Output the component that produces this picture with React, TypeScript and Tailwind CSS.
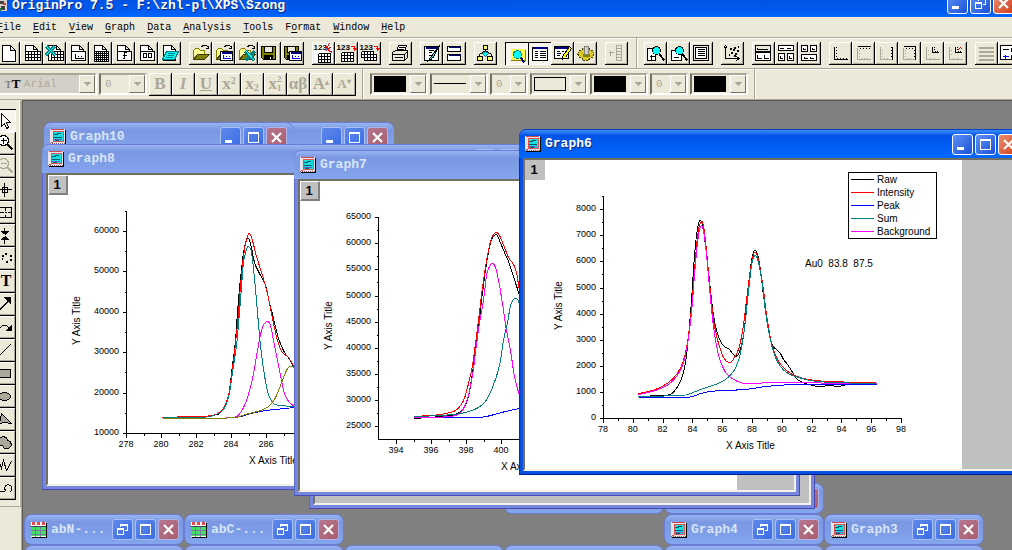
import type { ReactNode } from 'react';
import clsx from 'clsx';

type Point = [number, number];

/* ---------- small icon pieces ---------- */

function Icon({ children }: { children: ReactNode }) {
  return (
    <svg
      viewBox="-0.5 -0.5 22 22"
      className="block size-[22px] shrink-0"
      fill="none"
      stroke="#000"
      shapeRendering="crispEdges"
      aria-hidden="true"
    >
      {children}
    </svg>
  );
}

function Grid({ x, y, cols, rows, w = 3, h = 3 }: { x: number; y: number; cols: number; rows: number; w?: number; h?: number }) {
  let d = '';
  for (let i = 0; i <= cols; i++) d += `M${x + i * w} ${y}v${rows * h}`;
  for (let i = 0; i <= rows; i++) d += `M${x} ${y + i * h}h${cols * w}`;
  return (
    <>
      <rect x={x} y={y} width={cols * w} height={rows * h} fill="#fff" stroke="none" />
      <path d={d} />
    </>
  );
}

const sheet = <path d="M5 18V3h8l4 4v11z M13 3v4h4" fill="#fff" />;
const sheetBox = (
  <>
    {sheet}
    <rect x="5" y="9" width="14" height="9" fill="#fff" />
  </>
);
const folder = (
  <>
    <path d="M4 17V8l2-2h3l2 2h4v4" fill="#ffff99" stroke="#808000" />
    <path d="M4 17l4-5h12l-5 5z" fill="#808000" stroke="#404000" />
    <path d="M12 4l2-1h3l2 2M16 6h3V3" />
  </>
);
const floppy = (
  <>
    <path d="M3 4h14v13H5l-2-2z" fill="#808000" />
    <path d="M6 4h8v6H6z" fill="#ece9d8" />
    <path d="M6 13h8v4H6z" fill="#000" />
    <path d="M12 14v2" stroke="#fff" />
  </>
);
const miniGraph = (
  <>
    <rect x="8" y="9" width="12" height="9" fill="#fff" />
    <path d="M9 10h10" stroke="#000080" strokeWidth="2" />
    <path d="M11 12v4h7M13 14h1M16 14h1" stroke="#00f" />
  </>
);
const digits = (
  <text x="1" y="7" fontSize="8" fontWeight="700" fontFamily="Liberation Sans, sans-serif" fill="#000" stroke="none">
    123
  </text>
);
const redArrow = <path d="M15 4h4v4M17 6h4M18 7h2" stroke="#f00" />;
const glass = (
  <>
    <path d="M15 12l5 6" strokeWidth="2" />
    <circle cx="12" cy="8" r="4" fill="#0ff" />
  </>
);

const icons: Record<string, ReactNode> = {
  new: <path d="M5 3h8l5 5v11H5z M13 3v5h5" fill="#fff" />,
  worksheet: (
    <>
      {sheet}
      <Grid x={5} y={9} cols={5} rows={3} />
    </>
  ),
  excel: (
    <>
      {sheet}
      <Grid x={8} y={9} cols={4} rows={3} />
      <path d="M3 4l9 9M11 4l-9 9" stroke="#008080" strokeWidth="3" />
      <path d="M3 4l9 9M11 4l-9 9" stroke="#0ff" />
    </>
  ),
  graph: (
    <>
      {sheetBox}
      <path d="M9 11v5h8M11 14h1M14 14h1" />
    </>
  ),
  matrix: (
    <>
      {sheet}
      <Grid x={5} y={9} cols={7} rows={5} w={2} h={2} />
    </>
  ),
  func: (
    <>
      {sheetBox}
      <path d="M14 10h-2v6h-2M10 13h4" />
    </>
  ),
  layout: (
    <>
      {sheetBox}
      <path d="M8 11h3v4H8zM13 11h3v4h-3z" />
    </>
  ),
  notes: (
    <>
      {sheet}
      <path d="M8 9h12l-4 8H4z" fill="#0ff" stroke="#008080" />
      <path d="M9 11h7M8 13h7M7 15h7" stroke="#008080" />
    </>
  ),
  open: folder,
  openGraph: (
    <>
      {folder}
      {miniGraph}
    </>
  ),
  openExcel: (
    <>
      {folder}
      <path d="M10 9l9 9M19 9l-9 9" stroke="#008080" strokeWidth="3" />
      <path d="M11 9l8 9" stroke="#0ff" />
    </>
  ),
  save: floppy,
  saveGraph: (
    <>
      {floppy}
      {miniGraph}
    </>
  ),
  importWizard: (
    <>
      <rect x="1" y="1" width="19" height="19" fill="#fff" stroke="none" />
      {digits}
      <path d="M14 4l2 4 4 2M17 1l-3 5M14 8l5-4" stroke="#f00" />
      <Grid x={6} y={11} cols={4} rows={3} />
    </>
  ),
  importSingle: (
    <>
      {digits}
      {redArrow}
      <Grid x={6} y={10} cols={4} rows={3} />
    </>
  ),
  importMulti: (
    <>
      {digits}
      {redArrow}
      <Grid x={3} y={9} cols={4} rows={2} />
      <Grid x={6} y={12} cols={4} rows={2} />
    </>
  ),
  print: (
    <>
      <path d="M7 9l2-6h8l-2 6z" fill="#fff" />
      <path d="M9 5h6M8 7h6" />
      <path d="M3 10l3-2h12v7l-3 3H3z" fill="#ece9d8" />
      <path d="M3 12h12v6M15 12l3-3M5 15h8" />
      <path d="M13 14h1" stroke="#ff0" />
    </>
  ),
  refresh: (
    <>
      <rect x="4" y="4" width="14" height="14" fill="#fff" />
      <path d="M5 5h12M5 6h12" stroke="#000080" />
      <path d="M8 8h5M8 10h3M8 13h2" />
      <path d="M19 3L10 15l-2 3 4-2z" fill="#0ff" />
    </>
  ),
  duplicate: (
    <>
      <rect x="4" y="4" width="13" height="5" fill="#fff" />
      <path d="M5 5h12" stroke="#000080" />
      <rect x="4" y="12" width="13" height="6" fill="#fff" />
      <path d="M5 13h12" stroke="#000080" />
    </>
  ),
  explorer: (
    <>
      <path d="M11 7v6M5 15v-3l6-4 6 4v3" />
      <rect x="9" y="3" width="4" height="4" fill="#ffff66" />
      <path d="M8 11l3-2 3 2-3 3z" fill="#0ff" stroke="#008080" />
      <rect x="3" y="14" width="5" height="4" fill="#ffff66" />
      <rect x="13" y="14" width="5" height="4" fill="#ffff66" />
    </>
  ),
  projectView: (
    <>
      <rect x="4" y="5" width="14" height="12" fill="#ffff4d" stroke="none" />
      <path d="M4 17h15V6" stroke="#808000" />
      <path d="M14 14l4 5" stroke="#000080" strokeWidth="2" />
      <circle cx="11" cy="11" r="4" fill="#0ff" stroke="#008080" />
    </>
  ),
  results: (
    <>
      <rect x="3" y="4" width="15" height="13" fill="#fff" />
      <path d="M3 4h15M3 5h15" stroke="#000080" />
      <path d="M5 8h3M10 8h6M5 10h3M10 10h6M5 12h3M10 12h6M5 14h3M10 14h6" />
    </>
  ),
  script: (
    <>
      <rect x="3" y="4" width="14" height="12" fill="#fff" />
      <path d="M3 5h14M3 6h14" stroke="#000080" />
      <path d="M5 9h3M10 9h2M5 11h4M5 13h3" />
      <path d="M18 4l-7 10v3l3-2 6-9z" fill="#ff0" />
    </>
  ),
  code: (
    <>
      <path d="M3 11l2-3 3-1 1-2h5l1 2 3 1 2 3-2 4-3 1-1 2H9l-1-2-3-1z" fill="#d8c820" stroke="#404000" strokeDasharray="2 1" />
      <path d="M8 11h7v3H8z" fill="#808000" stroke="none" />
      <path d="M10 4h4v8h-4z" fill="#d4d0c8" stroke="#808080" />
    </>
  ),
  addColumn: (
    <g stroke="#aca899">
      <path d="M3 10h5M5 8v5M11 3h5v15h-5zM11 6h5M11 9h5M11 12h5M11 15h5" />
    </g>
  ),
  zoomIn: (
    <>
      <path d="M3 6h8v12H3z" fill="#fff" />
      {glass}
      <path d="M5 14h5M7 12v5" />
    </>
  ),
  zoomOut: (
    <>
      <path d="M4 8h7l3 3v7H4z" fill="#fff" />
      <path d="M6 15h5" />
      {glass}
    </>
  ),
  wholePage: (
    <>
      <rect x="3" y="3" width="15" height="15" />
      <rect x="5" y="5" width="11" height="11" fill="#fff" />
      <path d="M7 7h7M7 9h7M7 11h7M7 13h7" />
    </>
  ),
  rescale: (
    <>
      <path d="M4 4v12h13M2 6l2-3 2 3M15 14l3 2-3 2" />
      <path d="M8 6h2M12 5h2M15 8h2M9 10h2M13 11h2M11 7h2M16 4h1M12 13h2M7 12h1" strokeWidth="2" />
    </>
  ),
  extractTwo: (
    <>
      <rect x="3" y="3" width="15" height="6" fill="#ece9d8" />
      <rect x="3" y="10" width="15" height="8" fill="#fff" />
      <path d="M5 5v2h10M5 12v4h4M12 12v4h4" />
    </>
  ),
  extractFour: (
    <g>
      <path d="M3 3h15v5H3zM3 11h6v7H3zM12 11h6v7h-6z" fill="#fff" />
      <path d="M5 5v1h3M12 5v1h3M5 13v3h2M14 13v3h2" />
    </g>
  ),
  extractSix: (
    <g>
      <path d="M3 3h6v6H3zM12 3h6v6h-6zM3 12h15v6H3z" fill="#fff" />
      <path d="M5 5v2h2M14 5v2h2M6 14v2h3M12 14v2h3" />
    </g>
  ),
  axisBL: (
    <>
      <path d="M5 4v13h13" />
      <path d="M6 5h1M6 8h1M6 11h1M6 14h1M8 16v-1M11 16v-1M14 16v-1M17 16v-1" />
    </>
  ),
  axisTop: (
    <>
      <path d="M5 5v12h13M6 8h1M6 11h1M6 14h1M9 16v-1M12 16v-1M15 16v-1" stroke="#aca899" />
      <path d="M5 4h13M8 5v1M11 5v1M14 5v1M17 5v1" />
    </>
  ),
  axisRight: (
    <>
      <path d="M5 4v13h12M6 8h1M6 11h1M6 14h1M9 16v-1M12 16v-1" stroke="#aca899" />
      <path d="M17 4v13M16 5h-1M16 8h-1M16 11h-1M16 14h-1" />
    </>
  ),
  axisTopRight: (
    <>
      <path d="M5 5v12h12M6 8h1M6 11h1M6 14h1M9 16v-1M12 16v-1" stroke="#aca899" />
      <path d="M5 4h12v13M8 5v1M11 5v1M14 5v1M16 8h-1M16 11h-1M16 14h-1" />
    </>
  ),
  axisInset: (
    <>
      <path d="M5 4v13h13M6 8h1M6 12h1M9 16v-1M13 16v-1" stroke="#aca899" />
      <path d="M11 4v6h6M12 5h1M12 7h1M14 9v-1M16 9v-1" />
    </>
  ),
  axisInsetData: (
    <>
      <path d="M5 4v13h13M6 8h1M6 12h1M9 16v-1M13 16v-1" stroke="#aca899" />
      <path d="M11 4v6h6M12 5h1M12 7h1M14 9v-1M16 9v-1" />
      <path d="M13 8l3-3 2 2" stroke="#f00" />
    </>
  ),
  lines: <path d="M3 5h15M3 9h15M3 13h15M3 17h15" stroke="#aca899" strokeWidth="2" />,
  legend: (
    <>
      <rect x="2" y="3" width="19" height="14" fill="#fff" />
      <path d="M4 7h6M13 5h4M13 7h4M13 9h4M13 5v4M13 12h4M13 12v4" />
      <path d="M4 14h6M7 12v4" stroke="#00f" />
    </>
  ),
};

const tools: { name: string; icon: ReactNode; on?: boolean; letter?: string }[] = [
  { name: 'Pointer', on: true, icon: <path d="M7 3v13l3-3 2 5 2-1-2-5h4z" fill="#fff" /> },
  {
    name: 'Zoom In',
    icon: (
      <>
        <circle cx="10" cy="8" r="5" fill="#fff" />
        <path d="M7 8h6M10 5v6" />
        <path d="M14 12l5 5" strokeWidth="2" />
      </>
    ),
  },
  {
    name: 'Zoom Out',
    icon: (
      <g stroke="#aca899">
        <circle cx="10" cy="8" r="5" />
        <path d="M7 8h6" />
        <path d="M14 12l5 5" strokeWidth="2" />
      </g>
    ),
  },
  { name: 'Screen Reader', icon: <path d="M11 4v14M5 11h13M9 9h5v5H9z" /> },
  { name: 'Data Reader', icon: <path d="M6 6h12v10H6zM6 11h4M14 11h4M12 6v3M12 13v3M11 11h2" /> },
  {
    name: 'Data Selector',
    icon: <path d="M11 3v4M11 19v-4M8 7h7l-3 3zM8 15h7l-3-3z" fill="#000" />,
  },
  { name: 'Draw Data', icon: <path d="M8 8h2M11 6h2M16 8h2M16 12h2M12 14h2M8 11h1" strokeWidth="2" /> },
  { name: 'Text', letter: 'T', icon: null },
  {
    name: 'Arrow',
    icon: (
      <>
        <path d="M6 16L15 7M6 17L16 7" />
        <path d="M11 4h6v6z" fill="#000" />
      </>
    ),
  },
  {
    name: 'Curved Arrow',
    icon: (
      <>
        <path d="M6 12l3-3h4l4 4" />
        <path d="M18 9v5h-5z" fill="#000" />
      </>
    ),
  },
  { name: 'Line', icon: <path d="M6 16L17 5" /> },
  { name: 'Rectangle', icon: <rect x="5" y="7" width="12" height="8" fill="#aca899" /> },
  { name: 'Circle', icon: <ellipse cx="11" cy="11" rx="6" ry="4" fill="#aca899" /> },
  { name: 'Polygon', icon: <path d="M8 5l10 10-8-1-5 2 2-5z" fill="#aca899" /> },
  { name: 'Region', icon: <path d="M6 7l3-2 4 1 1 3 3 1 1 4-3 3h-4l-2-3H6z" fill="#aca899" /> },
  { name: 'Polyline', icon: <path d="M6 8l2 6 2-8 3 10 5-9" /> },
  { name: 'Freehand', icon: <path d="M6 14h5l1-1-1-2 1-3 3-1 3 2v4l-2 2" /> },
];

/* ---------- toolbar controls ---------- */

function ToolButton({ name, on, disabled, children }: { name: string; on?: boolean; disabled?: boolean; children: ReactNode }) {
  return (
    <button
      type="button"
      aria-label={name}
      disabled={disabled}
      className={clsx(
        'flex size-[23px] shrink-0 items-center justify-center overflow-hidden',
        on
          ? 'border-t border-l border-black bg-[#f7f5ee] shadow-[inset_-1px_-1px_0_#fff]'
          : 'border-r border-b border-black bg-[#ece9d8] shadow-[inset_1px_1px_0_#fff,inset_-1px_-1px_0_#aca899]',
      )}
    >
      {children}
    </button>
  );
}

function ToolGroup({ names, on = [] }: { names: string[]; on?: string[] }) {
  return (
    <div className="flex shrink-0">
      {names.map((name) => (
        <ToolButton key={name} name={name} on={on.includes(name)}>
          <Icon>{icons[name]}</Icon>
        </ToolButton>
      ))}
    </div>
  );
}

function Separator() {
  return <div className="w-[2px] shrink-0 self-stretch border-r border-l border-r-white border-l-[#aca899]" />;
}

interface ComboProps {
  label: string;
  value?: string;
  className: string;
  swatch?: ReactNode;
}

function Combo({ label, value = '', className, swatch }: ComboProps) {
  return (
    <div
      className={clsx(
        'relative flex h-[22px] shrink-0 items-center border-2 border-t-[#aca899] border-r-white border-b-white border-l-[#716f64]',
        className,
      )}
    >
      <select
        aria-label={label}
        disabled
        className="h-full w-full appearance-none bg-transparent pl-1 font-['Liberation_Mono',monospace] text-[11px] text-[#aca899]"
      >
        <option>{value}</option>
      </select>
      {swatch}
      <span className="pointer-events-none absolute inset-y-0 right-0 flex w-4 items-center justify-center border border-t-white border-r-[#716f64] border-b-[#716f64] border-l-white bg-[#ece9d8]">
        <svg viewBox="0 0 8 4" className="h-1 w-2" shapeRendering="crispEdges">
          <path d="M0 0h8L4 4z" fill="#aca899" />
        </svg>
      </span>
    </div>
  );
}

const blackSwatch = <span className="pointer-events-none absolute top-px left-[2px] h-4 w-8 bg-black" />;
const lineSwatch = <span className="pointer-events-none absolute top-2 left-[2px] h-px w-8 bg-black" />;
const boxSwatch = <span className="pointer-events-none absolute top-[2px] left-[2px] h-[14px] w-8 border border-black bg-[#ece9d8]" />;

/* ---------- windows ---------- */

function WinButton({ kind, active }: { kind: 'min' | 'max' | 'restore' | 'close'; active?: boolean }) {
  const tone =
    kind === 'close'
      ? active
        ? 'border-white bg-linear-to-br from-[#ee8d6e] to-[#cf3a15]'
        : 'border-[#b5b4e8] bg-linear-to-br from-[#b5758f] to-[#a95f6c]'
      : active
        ? 'border-white bg-linear-to-br from-[#5f90f5] to-[#1a4fd8]'
        : 'border-[#a9c0f5] bg-linear-to-br from-[#5f88ea] to-[#3a6ce4]';
  const labels = { min: 'Minimize', max: 'Maximize', restore: 'Restore', close: 'Close' };
  return (
    <button
      type="button"
      aria-label={labels[kind]}
      className={clsx('flex size-[21px] shrink-0 items-center justify-center rounded-[3px] border', tone)}
    >
      <svg viewBox="0 0 19 19" className="size-[19px]" fill="none" stroke="#fff">
        {kind === 'min' && <path d="M4 13.5h7" strokeWidth="3" />}
        {kind === 'max' && <path d="M4.500 14.500v-10h10v10zM4 5.500h11" shapeRendering="crispEdges" />}
        {kind === 'restore' && (
          <path d="M4.500 14.500v-6h6v6zM4 9.500h7M7.500 7V4.500h7v6h-3M7 5.500h8" shapeRendering="crispEdges" />
        )}
        {kind === 'close' && <path d="M5 5l9 9M14 5l-9 9" strokeWidth="2.200" />}
      </svg>
    </button>
  );
}

function GraphIcon() {
  return (
    <svg viewBox="0 0 16 16" className="size-4 shrink-0" shapeRendering="crispEdges" aria-hidden="true">
      <path d="M1 1h15v15H1z" fill="#000" />
      <path d="M0 0h15v15H0z" fill="#e8e4e8" />
      <path d="M1 0h13v1H1zM1 13h2v1H1z" fill="#d04848" />
      <path d="M3 2h10v10H3z" fill="#18e0e0" stroke="#e05050" />
      <path d="M4 5h3V4h4M4 8h8M5 11h3v-1h4" fill="none" stroke="#005a6a" />
      <path d="M4 10h8" stroke="#5858c8" />
      <path d="M0 14h15" stroke="#806060" strokeDasharray="1 1" />
    </svg>
  );
}

function SheetIcon() {
  return (
    <svg viewBox="0 0 16 16" className="size-4 shrink-0" shapeRendering="crispEdges" aria-hidden="true">
      <path d="M1 1h15v15H1z" fill="#000" />
      <path d="M0 0h15v15H0z" fill="#fff" />
      <path d="M1 0h3v3H1zM6 0h3v3H6zM11 0h3v3h-3z" fill="#f04040" />
      <path d="M0 5h15v9H0z" fill="#40e060" />
      <path d="M4.500 4v11M9.500 4v11M0 8.500h15M0 12.500h15" stroke="#7878a0" />
      <path d="M0 4.500h15" stroke="#404060" />
    </svg>
  );
}

interface TitleBarProps {
  title: string;
  active?: boolean;
  minimized?: boolean;
  icon?: 'graph' | 'sheet';
}

function TitleBar({ title, active, minimized, icon = 'graph' }: TitleBarProps) {
  return (
    <div
      className={clsx(
        'flex items-center gap-1 pl-[6px]',
        minimized ? 'h-[31px] rounded-lg border border-[#6a7cd8] pr-1' : 'h-[29px] rounded-t-[7px] border-t pr-[6px]',
        active
          ? 'border-[#0a3fc0] bg-linear-to-b from-[#3b8cff] via-[#0054e8] via-20% to-[#0068ff]'
          : 'border-[#6a7cd8] bg-linear-to-b from-[#98b4f2] via-[#7a97e2] via-25% to-[#83a6ee]',
      )}
    >
      {icon === 'graph' ? <GraphIcon /> : <SheetIcon />}
      <span
        className={clsx(
          "grow truncate font-['Liberation_Mono',monospace] text-[13px] leading-4 font-bold",
          active ? 'text-white [text-shadow:1px_1px_#0a2a80]' : 'text-[#d8e4fa]',
        )}
      >
        {title}
      </span>
      <div className="flex gap-[2px]">
        <WinButton kind={minimized ? 'restore' : 'min'} active={active} />
        <WinButton kind="max" active={active} />
        <WinButton kind="close" active={active} />
      </div>
    </div>
  );
}

interface ChildWindowProps {
  title: string;
  active?: boolean;
  className: string;
  pageClassName?: string;
  children?: ReactNode;
}

function ChildWindow({ title, active, className, pageClassName = 'w-full bg-white', children }: ChildWindowProps) {
  return (
    <section
      className={clsx(
        'absolute flex flex-col overflow-hidden rounded-t-lg',
        active
          ? 'bg-[#0a50e0] shadow-[inset_-1px_-1px_0_#001a90,inset_1px_0_0_#0030c0]'
          : 'bg-[#7588dd] shadow-[inset_-1px_-1px_0_#4a4ab0,inset_1px_0_0_#5a68cc]',
        className,
      )}
    >
      <TitleBar title={title} active={active} />
      <div className="mx-1 mb-1 min-h-0 grow overflow-hidden border-2 border-t-[#716f64] border-r-[#f4f2e8] border-b-[#f4f2e8] border-l-[#716f64] bg-[#c0c0c0]">
        <div className={clsx('relative h-full overflow-hidden', pageClassName)}>
          {children}
          {children && (
            <button
              type="button"
              className={clsx(
                "absolute top-0 left-0 size-5 bg-[#c0c0c0] pr-[2px] font-['Liberation_Sans',sans-serif] text-[13px] leading-4 font-bold",
                !active && 'border border-t-white border-r-[#808080] border-b-[#808080] border-l-white shadow-[inset_-1px_-1px_0_#808080]',
              )}
            >
              1
            </button>
          )}
        </div>
      </div>
    </section>
  );
}

function MinimizedWindow({ title, icon, className }: { title: string; icon?: 'graph' | 'sheet'; className: string }) {
  return (
    <section className={clsx('absolute w-40', className)}>
      <TitleBar title={title} minimized icon={icon} />
    </section>
  );
}

/* ---------- plots ---------- */

interface Axis {
  first: number;
  step: number;
  labels: string[];
}

interface PlotProps {
  view: string;
  className: string;
  left: number;
  right: number;
  top: number;
  bottom: number;
  x: Axis;
  y: Axis;
  xTitle: Point;
  yTitle: Point;
  curves: { color: string; points: Point[] }[];
  children?: ReactNode;
}

// Catmull-Rom through the sampled points
function smooth(p: Point[]) {
  let d = `M${p[0][0]} ${p[0][1]}`;
  for (let i = 0; i < p.length - 1; i++) {
    const a = p[i - 1] ?? p[i];
    const b = p[i];
    const c = p[i + 1];
    const e = p[i + 2] ?? c;
    d += `C${b[0] + (c[0] - a[0]) / 6} ${b[1] + (c[1] - a[1]) / 6} ${c[0] - (e[0] - b[0]) / 6} ${c[1] - (e[1] - b[1]) / 6} ${c[0]} ${c[1]}`;
  }
  return d;
}

function Plot({ view, className, left, right, top, bottom, x, y, xTitle, yTitle, curves, children }: PlotProps) {
  let ticks = `M${left} ${top}V${bottom}H${right}`;
  for (let i = 0; x.first + (i * x.step) / 2 <= right + 1; i++) {
    ticks += `M${Math.round(x.first + (i * x.step) / 2)} ${bottom}v${i % 2 ? 2 : 4}`;
  }
  for (let i = 0; y.first - (i * y.step) / 2 >= top - 1; i++) {
    ticks += `M${left} ${Math.round(y.first - (i * y.step) / 2)}h${i % 2 ? -2 : -4}`;
  }
  return (
    <svg viewBox={view} className={clsx('absolute top-0 left-0 font-["Liberation_Sans",sans-serif]', className)}>
      <g transform="translate(.5 .5)" fill="none" shapeRendering="crispEdges">
        <path d={ticks} stroke="#000" />
        {curves.map((c, i) => (
          <path key={i} d={smooth(c.points)} stroke={c.color} />
        ))}
      </g>
      <g fontSize="9" fill="#000">
        {x.labels.map((t, i) => (
          <text key={t} x={x.first + i * x.step} y={bottom + 14} textAnchor="middle">
            {t}
          </text>
        ))}
        {y.labels.map((t, i) => (
          <text key={t} x={left - 7} y={Math.round(y.first - i * y.step) + 2} textAnchor="end">
            {t}
          </text>
        ))}
      </g>
      <g fontSize="10" fill="#000">
        <text x={xTitle[0]} y={xTitle[1]}>
          X Axis Title
        </text>
        <text transform={`translate(${yTitle[0]} ${yTitle[1]}) rotate(-90)`}>Y Axis Title</text>
        {children}
      </g>
    </svg>
  );
}

const graph6Curves: PlotProps['curves'] = [
  {
    color: '#000',
    points: [[638, 396], [660, 395], [670, 394], [675, 389], [679, 383], [683, 372], [686, 355], [689, 325], [691, 300], [694, 255], [697, 228], [700, 220], [703, 230], [707, 262], [710, 290], [713, 315], [716, 330], [720, 341], [724, 346], [729, 349], [733, 354], [737, 355], [741, 345], [744, 328], [747, 295], [751, 260], [754, 250], [757, 254], [760, 270], [763, 295], [768, 330], [772, 345], [776, 349], [780, 353], [783, 359], [787, 364], [791, 370], [795, 377], [800, 381], [812, 385], [820, 386], [830, 385], [838, 386], [848, 384], [876, 383]],
  },
  {
    color: '#f00',
    points: [[638, 393], [655, 389], [668, 382], [676, 374], [682, 363], [687, 342], [691, 308], [694, 270], [697, 236], [700, 222], [703, 225], [706, 250], [709, 283], [713, 319], [716, 335], [719, 346], [723, 357], [728, 362], [732, 360], [738, 349], [742, 331], [746, 300], [750, 268], [753, 254], [755, 252], [758, 259], [763, 290], [766, 314], [770, 338], [775, 355], [781, 365], [790, 373], [803, 378], [826, 381], [876, 382]],
  },
  {
    color: '#00f',
    points: [[638, 397], [680, 397], [692, 396], [700, 393], [710, 391], [722, 390], [745, 389], [765, 386], [792, 384], [815, 384], [876, 384]],
  },
  {
    color: '#f0f',
    points: [[638, 394], [655, 390], [668, 384], [676, 376], [682, 365], [687, 344], [691, 312], [694, 275], [697, 242], [700, 226], [703, 230], [706, 254], [709, 287], [712, 318], [716, 345], [720, 361], [726, 373], [735, 380], [745, 383], [775, 382], [811, 382], [830, 383], [876, 383]],
  },
  {
    color: '#008080',
    points: [[638, 396], [680, 395], [690, 393], [700, 389], [715, 384], [725, 379], [733, 371], [738, 360], [741, 347], [744, 328], [747, 300], [750, 273], [752, 260], [755, 255], [758, 262], [762, 285], [765, 311], [768, 330], [771, 344], [775, 357], [780, 366], [786, 372], [795, 376], [810, 380], [830, 382], [876, 383]],
  },
];

const graph7Curves: PlotProps['curves'] = [
  {
    color: '#000',
    points: [[414, 418], [440, 416], [455, 414], [463, 408], [468, 396], [472, 372], [475, 350], [479, 318], [482, 292], [486, 263], [490, 242], [493, 236], [496, 234], [499, 240], [504, 252], [508, 261], [512, 273], [519, 295], [524, 312]],
  },
  {
    color: '#f00',
    points: [[414, 416], [440, 414], [455, 410], [463, 400], [468, 383], [472, 365], [475, 343], [479, 312], [482, 287], [487, 255], [491, 238], [496, 232], [500, 237], [504, 247], [508, 257], [513, 264], [516, 272], [519, 290], [524, 312]],
  },
  {
    color: '#00f',
    points: [[414, 417], [475, 417], [490, 415], [505, 411], [519, 408], [524, 407]],
  },
  {
    color: '#f0f',
    points: [[414, 417], [450, 416], [461, 411], [467, 398], [472, 375], [475, 352], [479, 322], [483, 300], [486, 275], [489, 266], [492, 263], [495, 267], [499, 285], [503, 310], [506, 330], [510, 350], [514, 376], [519, 395], [524, 405]],
  },
  {
    color: '#008080',
    points: [[414, 416], [440, 415], [460, 413], [474, 409], [484, 402], [492, 387], [499, 365], [503, 340], [507, 322], [510, 305], [513, 299], [516, 298], [519, 303], [524, 320]],
  },
];

const graph8Curves: PlotProps['curves'] = [
  {
    color: '#000',
    points: [[162, 417], [190, 417], [213, 415], [222, 410], [228, 395], [232, 365], [235, 340], [237, 312], [239, 288], [242, 260], [244, 247], [247, 238], [250, 243], [254, 262], [258, 271], [265, 285], [268, 298], [273, 318], [278, 338], [284, 352], [290, 360], [294, 369]],
  },
  {
    color: '#f00',
    points: [[162, 417], [190, 416], [212, 415], [222, 409], [228, 395], [232, 368], [235, 343], [238, 312], [240, 285], [243, 256], [246, 239], [249, 233], [252, 240], [256, 256], [262, 275], [267, 293], [272, 318], [277, 340], [282, 352], [288, 357], [294, 367]],
  },
  {
    color: '#00f',
    points: [[162, 418], [200, 418], [235, 417], [250, 413], [266, 410], [294, 407]],
  },
  {
    color: '#f0f',
    points: [[200, 418], [232, 417], [240, 412], [246, 400], [252, 378], [257, 350], [261, 330], [264, 323], [267, 321], [270, 325], [274, 345], [279, 370], [284, 393], [289, 402], [294, 406]],
  },
  {
    color: '#008080',
    points: [[162, 417], [200, 417], [213, 415], [222, 410], [228, 397], [232, 372], [236, 345], [239, 312], [241, 286], [243, 262], [246, 249], [248, 246], [251, 252], [254, 278], [257, 312], [260, 345], [264, 375], [268, 394], [273, 403], [280, 405], [294, 406]],
  },
  {
    color: '#808000',
    points: [[162, 418], [210, 418], [234, 417], [245, 414], [260, 410], [268, 406], [274, 399], [280, 385], [285, 372], [289, 366], [294, 367]],
  },
];

const legend = [
  { label: 'Raw', color: '#000' },
  { label: 'Intensity', color: '#f00' },
  { label: 'Peak', color: '#00f' },
  { label: 'Sum', color: '#008080' },
  { label: 'Background', color: '#f0f' },
];

function Desktop() {
  return (
    <main className="relative grow overflow-hidden bg-[#808080] shadow-[inset_1px_1px_0_#5a5850]">
      <MinimizedWindow title="" className="top-[383px] left-[482px]" />
      <MinimizedWindow title="" className="top-[383px] left-[642px]" />
      <MinimizedWindow title="abN-..." icon="sheet" className="top-[414px] left-[2px]" />
      <MinimizedWindow title="abC-..." icon="sheet" className="top-[414px] left-[162px]" />
      <MinimizedWindow title="Graph4" className="top-[414px] left-[642px]" />
      <MinimizedWindow title="Graph3" className="top-[414px] left-[802px]" />
      <MinimizedWindow title="" className="top-[445px] left-[2px]" />
      <MinimizedWindow title="" className="top-[445px] left-[162px]" />
      <MinimizedWindow title="" className="top-[445px] left-[322px]" />
      <MinimizedWindow title="" className="top-[445px] left-[482px]" />
      <MinimizedWindow title="" className="top-[445px] left-[642px]" />
      <MinimizedWindow title="" className="top-[445px] left-[802px]" />

      <ChildWindow title="" className="top-[22px] left-[150px] h-[300px] w-[222px]" />
      <ChildWindow title="" className="top-[102px] left-[287px] h-[307px] w-[506px]" pageClassName="w-full bg-[#c0c0c0]" />
      <ChildWindow title="Graph10" className="top-[22px] left-[22px] h-[300px] w-[249px]" />

      <ChildWindow title="Graph8" className="top-[44px] left-[20px] h-[346px] w-[506px]">
        <Plot
          view="48 175 437 309"
          className="h-[309px] w-[437px]"
          left={126}
          right={424}
          top={211}
          bottom={433}
          x={{ first: 126, step: 35, labels: ['278', '280', '282', '284', '286'] }}
          y={{ first: 433, step: 40.4, labels: ['10000', '20000', '30000', '40000', '50000', '60000'] }}
          xTitle={[249, 464]}
          yTitle={[80, 345]}
          curves={graph8Curves}
        />
      </ChildWindow>

      <ChildWindow title="Graph7" className="top-[50px] left-[272px] h-[346px] w-[506px]" pageClassName="w-[437px] bg-white">
        <Plot
          view="300 181 437 309"
          className="h-[309px] w-[437px]"
          left={378}
          right={676}
          top={217}
          bottom={439}
          x={{ first: 396, step: 35, labels: ['394', '396', '398', '400'] }}
          y={{ first: 426, step: 26.1, labels: ['25000', '30000', '35000', '40000', '45000', '50000', '55000', '60000', '65000'] }}
          xTitle={[501, 470]}
          yTitle={[332, 350]}
          curves={graph7Curves}
        />
      </ChildWindow>

      <ChildWindow title="Graph6" active className="top-[29px] left-[497px] h-[346px] w-[506px]" pageClassName="w-[437px] bg-white">
        <Plot
          view="525 160 437 309"
          className="h-[309px] w-[437px]"
          left={603}
          right={901}
          top={196}
          bottom={418}
          x={{ first: 603, step: 29.8, labels: ['78', '80', '82', '84', '86', '88', '90', '92', '94', '96', '98'] }}
          y={{ first: 418, step: 26.1, labels: ['0', '1000', '2000', '3000', '4000', '5000', '6000', '7000', '8000'] }}
          xTitle={[726, 449]}
          yTitle={[562, 330]}
          curves={graph6Curves}
        >
          <rect x="848.5" y="172.500" width="88" height="66" fill="#fff" stroke="#000" />
          {legend.map((item, i) => (
            <g key={item.label}>
              <path d={`M851 ${179.5 + i * 13}h23`} stroke={item.color} />
              <text x="877" y={183 + i * 13}>
                {item.label}
              </text>
            </g>
          ))}
          <text x="805" y="267" xmlSpace="preserve">
            {'Au0  83.8  87.5'}
          </text>
        </Plot>
      </ChildWindow>
    </main>
  );
}

/* ---------- shell ---------- */

const menus = [
  ['', 'F', 'ile'],
  ['', 'E', 'dit'],
  ['', 'V', 'iew'],
  ['', 'G', 'raph'],
  ['', 'D', 'ata'],
  ['', 'A', 'nalysis'],
  ['', 'T', 'ools'],
  ['F', 'o', 'rmat'],
  ['', 'W', 'indow'],
  ['', 'H', 'elp'],
];

const formats: { name: string; label: ReactNode; className?: string }[] = [
  { name: 'Bold', label: 'B' },
  { name: 'Italic', label: 'I', className: 'italic' },
  { name: 'Underline', label: 'U', className: 'underline' },
  { name: 'Superscript', label: <>x<sup className="text-[10px]">2</sup></> },
  { name: 'Subscript', label: <>x<sub className="text-[10px]">2</sub></> },
  {
    name: 'Super-Subscript',
    label: (
      <span className="flex items-center">
        x
        <span className="flex flex-col text-[9px] leading-[9px]">
          <span>2</span>
          <span>1</span>
        </span>
      </span>
    ),
  },
  { name: 'Greek', label: 'αβ' },
  { name: 'Increase Font', label: <>A<sup className="text-[8px]">▴</sup></> },
  { name: 'Decrease Font', label: <>A<sup className="text-[8px]">▾</sup></>, className: 'text-[13px]' },
];

export default function App() {
  return (
    <div className="flex h-screen flex-col overflow-hidden bg-[#ece9d8] text-black">
      <header className="flex h-[17px] shrink-0 items-end overflow-hidden bg-linear-to-b from-[#0054e3] via-[#0058ee] to-[#0066ff]">
        <div className="flex h-[23px] grow items-center gap-1">
          <svg viewBox="0 0 14 14" className="-ml-[6px] size-[14px] shrink-0" shapeRendering="crispEdges" aria-hidden="true">
            <path d="M0 0h13v12H0z" fill="#d8d0c8" />
            <path d="M5 2h5v3H5zM7 7h4v4H7z" fill="#404040" />
            <path d="M2 6h4v3H2zM9 4h3v2H9z" fill="#e03030" />
            <path d="M4 9h3v3H4z" fill="#208050" />
          </svg>
          <h1 className="font-['Liberation_Mono',monospace] text-[13px] leading-4 font-bold whitespace-pre text-white [text-shadow:1px_1px_#0a2a80]">
            OriginPro 7.5 - F:\zhl-pl\XPS\Szong
          </h1>
        </div>
        <div className="-mr-[2px] flex shrink-0 gap-[2px] pb-[3px]">
          <WinButton kind="min" active />
          <WinButton kind="restore" active />
          <WinButton kind="close" active />
        </div>
      </header>

      <nav className="-ml-[3px] flex h-5 shrink-0 items-center gap-3 font-['Liberation_Mono',monospace] text-[10px]">
        {menus.map(([pre, key, post]) => (
          <button type="button" key={pre + key + post}>
            {pre}
            <u className="underline-offset-2">{key}</u>
            {post}
          </button>
        ))}
      </nav>

      <div className="flex h-8 shrink-0 items-center gap-2 overflow-hidden border-t border-b border-[#aca899] shadow-[inset_0_1px_0_#fff]">
        <div className="-ml-[3px]">
          <ToolGroup names={['new', 'worksheet', 'excel', 'graph', 'matrix', 'func', 'layout', 'notes']} />
        </div>
        <ToolGroup names={['open', 'openGraph', 'openExcel', 'save', 'saveGraph']} />
        <ToolGroup names={['importWizard', 'importSingle', 'importMulti']} />
        <ToolGroup names={['print']} />
        <ToolGroup names={['refresh', 'duplicate']} />
        <ToolGroup names={['explorer']} />
        <ToolGroup names={['projectView', 'results', 'script', 'code']} on={['projectView', 'results']} />
        <ToolGroup names={['addColumn']} />
        <div className="flex items-center gap-[6px] self-stretch">
          <Separator />
          <ToolGroup names={['zoomIn', 'zoomOut', 'wholePage']} />
        </div>
        <ToolGroup names={['rescale']} />
        <ToolGroup names={['extractTwo', 'extractFour', 'extractSix']} />
        <ToolGroup names={['axisBL', 'axisTop', 'axisRight', 'axisTopRight', 'axisInset', 'axisInsetData']} />
        <ToolGroup names={['lines', 'legend']} />
      </div>

      <div className="flex h-[31px] shrink-0 items-center gap-[2px] overflow-hidden border-b border-[#aca899] shadow-[inset_0_1px_0_#fff]">
        <div className="relative -ml-[2px] shrink-0 bg-[#d4d0c8]">
          <Combo label="Font" value="&nbsp;&nbsp;&nbsp;Arial" className="w-[99px]" />
          <span className="pointer-events-none absolute top-[2px] left-[7px] font-['Liberation_Serif',serif] text-[13px] leading-[18px] font-bold">
            <span className="text-[10px] text-[#808080]">T</span>T
          </span>
        </div>
        <Combo label="Font Size" value="0" className="w-12" />
        <div className="flex shrink-0">
          {formats.map((f) => (
            <ToolButton key={f.name} name={f.name} disabled>
              <span
                className={clsx(
                  "font-['Liberation_Serif',serif] leading-5 font-bold whitespace-nowrap text-[#aca899]",
                  f.className?.includes('text-') ? '' : 'text-[17px]',
                  f.className,
                )}
              >
                {f.label}
              </span>
            </ToolButton>
          ))}
        </div>
        <div className="flex gap-[6px] self-stretch pl-1">
          <Separator />
          <div className="flex items-center gap-[2px]">
            <Combo label="Line Color" className="w-[58px]" swatch={blackSwatch} />
            <Combo label="Line Style" className="w-[58px]" swatch={lineSwatch} />
            <Combo label="Line Width" value="0" className="w-[38px]" />
            <Combo label="Fill Color" className="w-[58px]" swatch={boxSwatch} />
            <Combo label="Pattern Color" className="w-[58px]" swatch={blackSwatch} />
            <Combo label="Pattern Width" value="0" className="w-[38px]" />
            <Combo label="Border Color" className="w-[58px]" swatch={blackSwatch} />
          </div>
          <Separator />
        </div>
      </div>

      <div className="flex min-h-0 grow">
        <aside className="w-[22px] shrink-0 border-r border-[#aca899] pt-px">
          <div className="w-[21px] overflow-hidden border-r border-b border-[#aca899] pt-2 pb-[6px] shadow-[inset_-1px_0_0_#fff]">
            <div className="flex w-4 flex-col items-end">
              {tools.map((tool) => (
                <ToolButton key={tool.name} name={tool.name} on={tool.on}>
                  {tool.letter ? (
                    <span className="pl-1 font-['Liberation_Serif',serif] text-[16px] font-bold">{tool.letter}</span>
                  ) : (
                    <Icon>{tool.icon}</Icon>
                  )}
                </ToolButton>
              ))}
            </div>
          </div>
        </aside>
        <Desktop />
      </div>
    </div>
  );
}
